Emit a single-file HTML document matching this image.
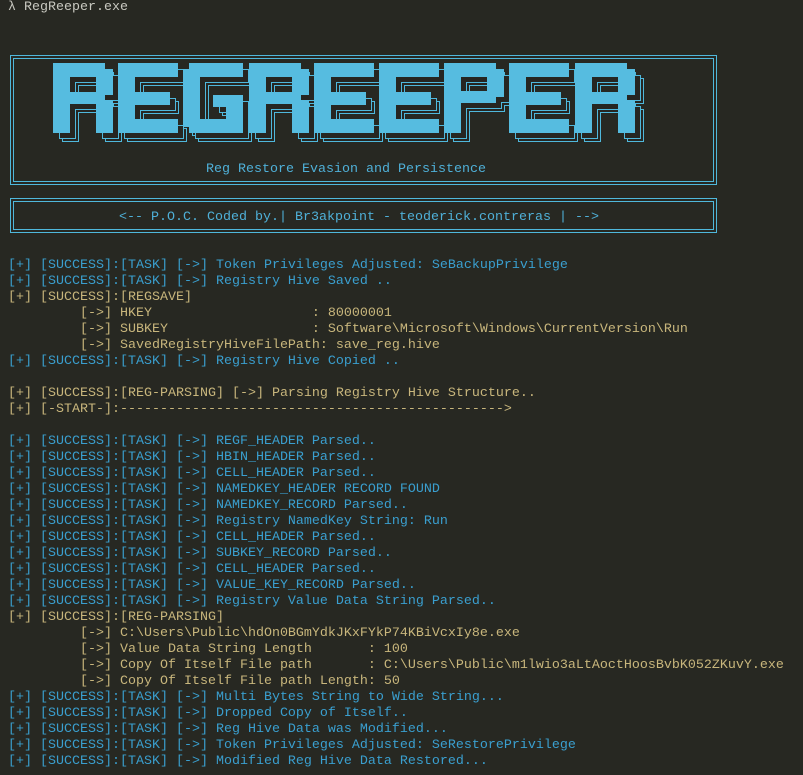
<!DOCTYPE html>
<html><head><meta charset="utf-8"><style>
html,body{margin:0;padding:0;background:#272822;width:803px;height:775px;overflow:hidden}
.t{position:absolute;left:8px;font-family:"Liberation Mono",monospace;font-size:13.33px;line-height:16px;white-space:pre;color:#3a9fcf}
.y{color:#c8b67c}.w{color:#c8c8c0}
.box{position:absolute;border:1px solid #4fb8dc;box-shadow:inset 0 0 0 2px #272822, inset 0 0 0 3px #4fb8dc}
</style></head><body>
<div class="t w" style="top:0px">λ RegReeper.exe</div>
<div class="box" style="left:10px;top:55px;width:705px;height:128px"></div>
<div class="box" style="left:10px;top:198px;width:705px;height:33px"></div>
<svg style="position:absolute;left:0;top:0" width="803" height="240">
<defs>
<filter id="er" x="-5%" y="-5%" width="110%" height="110%"><feMorphology operator="erode" radius="1"/></filter>
<g id="R"><rect x="0" y="0" width="17" height="70"/><rect x="0" y="0" width="52" height="14"/><rect x="43" y="6" width="17" height="26"/><rect x="0" y="29" width="52" height="12"/><rect x="43" y="37" width="17" height="33"/></g>
<g id="E"><rect x="0" y="0" width="17" height="70"/><rect x="0" y="0" width="60" height="14"/><rect x="0" y="29" width="52" height="13"/><rect x="0" y="56" width="60" height="14"/></g>
<g id="G"><rect x="0" y="6" width="17" height="58"/><rect x="6" y="0" width="54" height="14"/><rect x="6" y="56" width="54" height="14"/><rect x="43" y="32" width="17" height="38"/><rect x="30" y="32" width="30" height="12"/></g>
<g id="P"><rect x="0" y="0" width="17" height="70"/><rect x="0" y="0" width="52" height="14"/><rect x="43" y="6" width="17" height="28"/><rect x="0" y="28" width="52" height="12"/></g>
<g id="word">
<use href="#R" x="53"/><use href="#E" x="118"/><use href="#G" x="183"/><use href="#R" x="249"/><use href="#E" x="314"/><use href="#E" x="379"/><use href="#P" x="444"/><use href="#E" x="509"/><use href="#R" x="575"/>
</g>
</defs>
<g transform="translate(9,72)"><g fill="#4fb8dc"><use href="#word"/></g><g fill="#272822" filter="url(#er)"><use href="#word"/></g></g>
<g transform="translate(6,69)"><g fill="#4fb8dc"><use href="#word"/></g><g fill="#272822" filter="url(#er)"><use href="#word"/></g></g>
<g fill="#56bce0" transform="translate(0,63)"><use href="#word"/></g>
<text x="346" y="172" text-anchor="middle" font-family="Liberation Mono,monospace" font-size="13.33" fill="#4fb0d8">Reg Restore Evasion and Persistence</text>
<text x="359" y="220" text-anchor="middle" font-family="Liberation Mono,monospace" font-size="13.33" fill="#4fb0d8">&lt;-- P.O.C. Coded by.| Br3akpoint - teoderick.contreras | --&gt;</text>
</svg>
<div class="t" style="top:258px">[+] [SUCCESS]:[TASK] [->] Token Privileges Adjusted: SeBackupPrivilege
[+] [SUCCESS]:[TASK] [->] Registry Hive Saved ..
<span class="y">[+] [SUCCESS]:[REGSAVE]</span>
<span class="y">         [->] HKEY                    : 80000001</span>
<span class="y">         [->] SUBKEY                  : Software\Microsoft\Windows\CurrentVersion\Run</span>
<span class="y">         [->] SavedRegistryHiveFilePath: save_reg.hive</span>
[+] [SUCCESS]:[TASK] [->] Registry Hive Copied ..

<span class="y">[+] [SUCCESS]:[REG-PARSING] [->] Parsing Registry Hive Structure..</span>
<span class="y">[+] [-START-]:------------------------------------------------></span>

[+] [SUCCESS]:[TASK] [->] REGF_HEADER Parsed..
[+] [SUCCESS]:[TASK] [->] HBIN_HEADER Parsed..
[+] [SUCCESS]:[TASK] [->] CELL_HEADER Parsed..
[+] [SUCCESS]:[TASK] [->] NAMEDKEY_HEADER RECORD FOUND
[+] [SUCCESS]:[TASK] [->] NAMEDKEY_RECORD Parsed..
[+] [SUCCESS]:[TASK] [->] Registry NamedKey String: Run
[+] [SUCCESS]:[TASK] [->] CELL_HEADER Parsed..
[+] [SUCCESS]:[TASK] [->] SUBKEY_RECORD Parsed..
[+] [SUCCESS]:[TASK] [->] CELL_HEADER Parsed..
[+] [SUCCESS]:[TASK] [->] VALUE_KEY_RECORD Parsed..
[+] [SUCCESS]:[TASK] [->] Registry Value Data String Parsed..
<span class="y">[+] [SUCCESS]:[REG-PARSING]</span>
<span class="y">         [->] C:\Users\Public\hdOn0BGmYdkJKxFYkP74KBiVcxIy8e.exe</span>
<span class="y">         [->] Value Data String Length       : 100</span>
<span class="y">         [->] Copy Of Itself File path       : C:\Users\Public\m1lwio3aLtAoctHoosBvbK052ZKuvY.exe</span>
<span class="y">         [->] Copy Of Itself File path Length: 50</span>
[+] [SUCCESS]:[TASK] [->] Multi Bytes String to Wide String...
[+] [SUCCESS]:[TASK] [->] Dropped Copy of Itself..
[+] [SUCCESS]:[TASK] [->] Reg Hive Data was Modified...
[+] [SUCCESS]:[TASK] [->] Token Privileges Adjusted: SeRestorePrivilege
[+] [SUCCESS]:[TASK] [->] Modified Reg Hive Data Restored...</div>
</body></html>
